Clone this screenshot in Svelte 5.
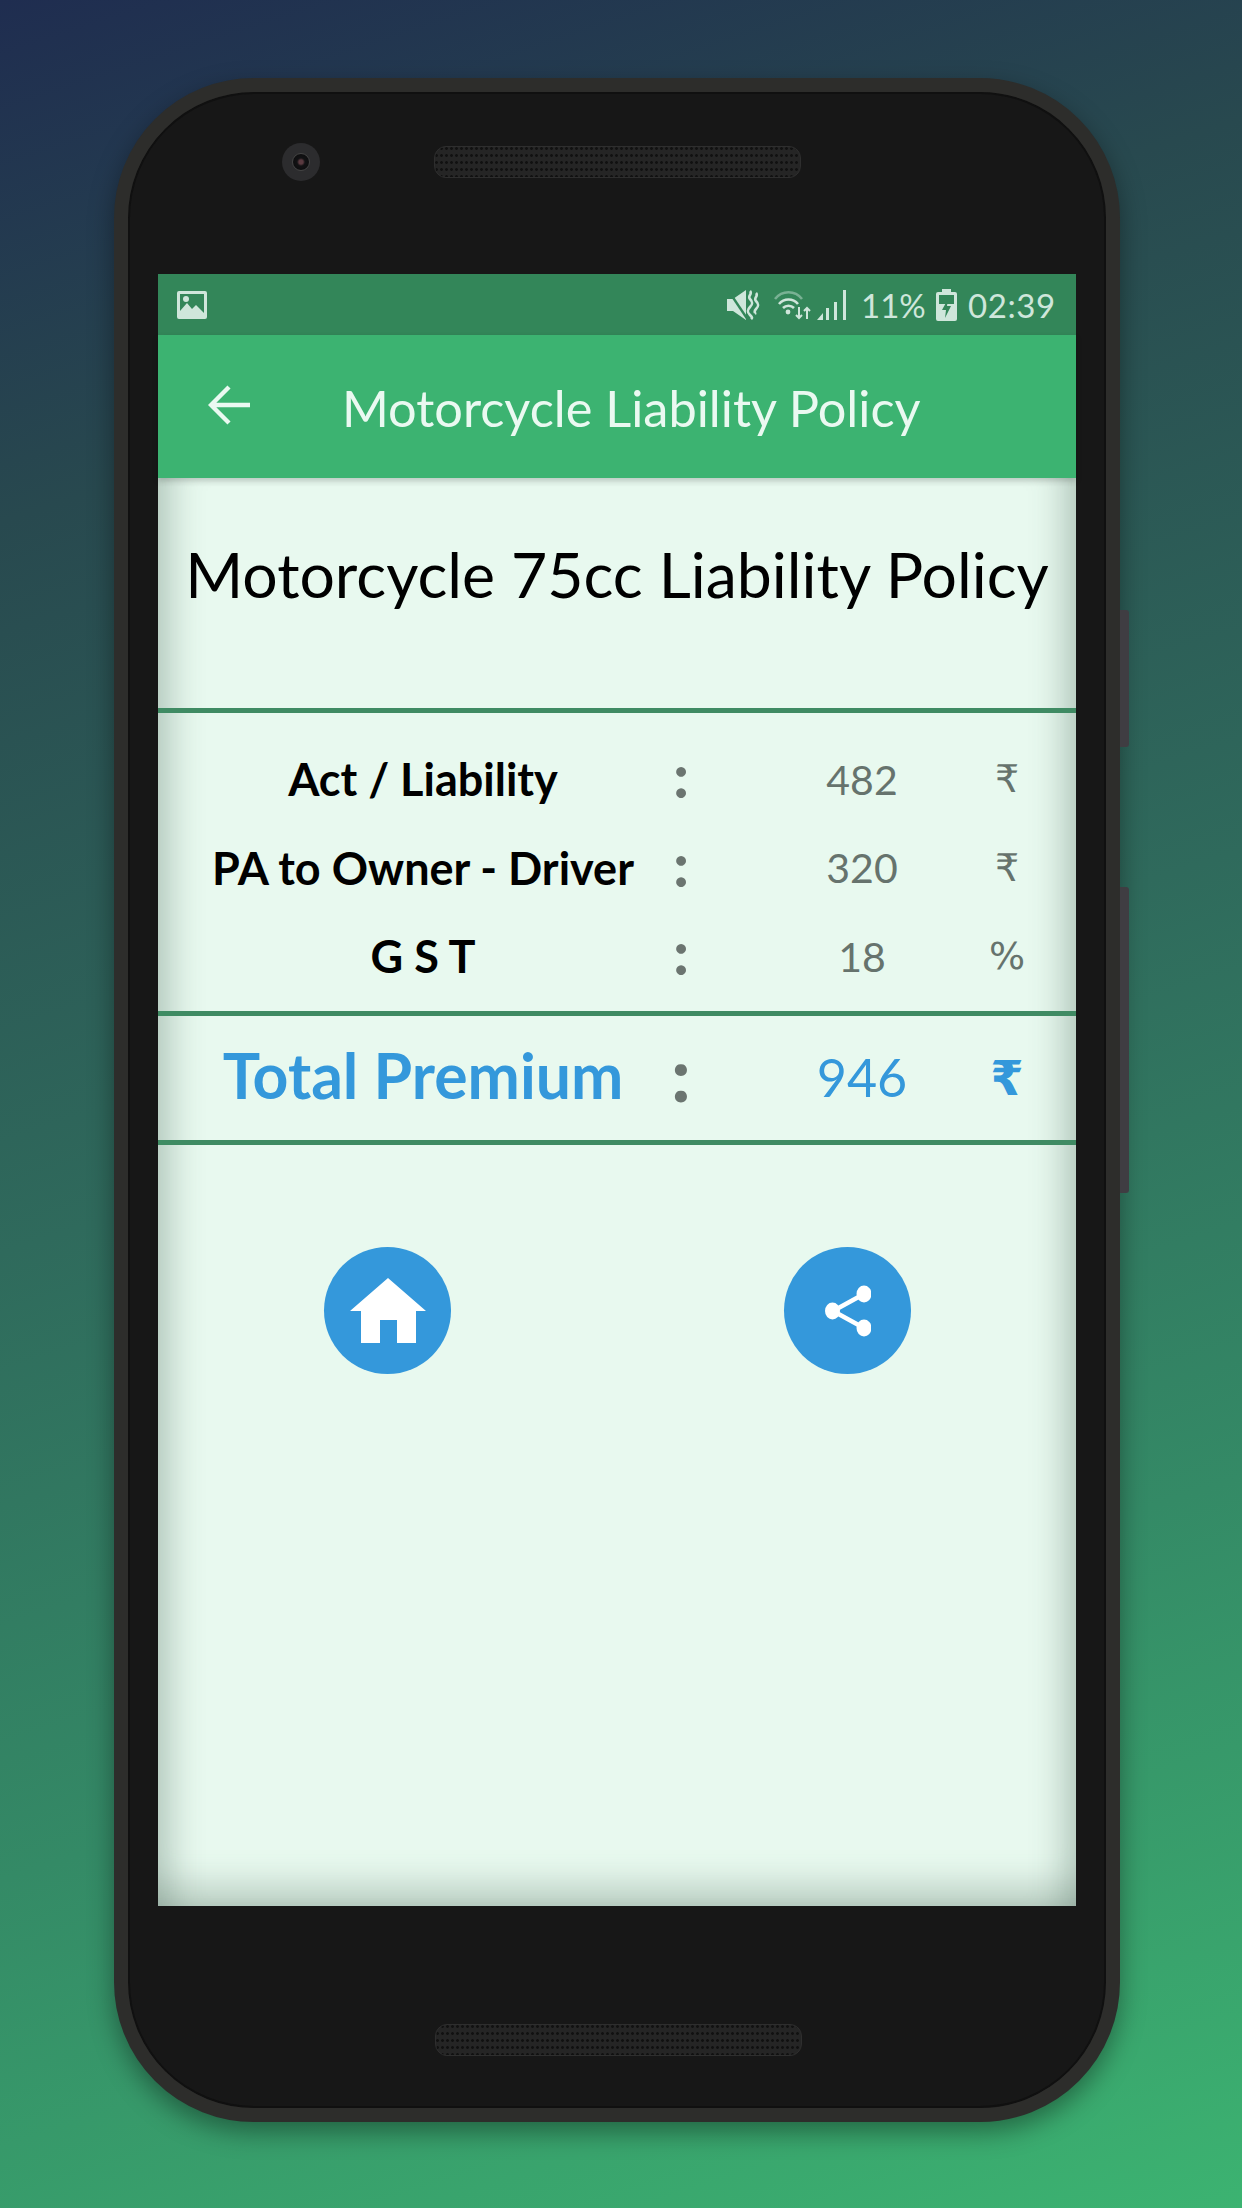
<script>
  const rows = [
    { label: 'Act / Liability', value: '482', unit: '₹' },
    { label: 'PA to Owner - Driver', value: '320', unit: '₹' },
    { label: 'G S T', value: '18', unit: '%' }
  ];
</script>

<div class="stage">
  <div class="phone">
    <span class="side side-a"></span>
    <span class="side side-b"></span>
    <div class="bezel-top">
      <div class="camera"><span class="lens"></span></div>
      <div class="speaker"></div>
    </div>
    <div class="screen">
      <div class="status">
        <svg class="ic-image" viewBox="0 0 30 28" width="30" height="28">
          <path fill="#cfe6db" fill-rule="evenodd" d="M2 0h26a2 2 0 0 1 2 2v24a2 2 0 0 1-2 2H2a2 2 0 0 1-2-2V2a2 2 0 0 1 2-2zM3 3v17l7-8 5 6 4-4 8 8V3z"/>
          <circle cx="9" cy="8" r="3" fill="#cfe6db"/>
        </svg>
        <span class="grow"></span>
        <svg class="ic-mute" viewBox="0 0 33 30" width="33" height="30">
          <path fill="#cfe6db" d="M0 9h6l13-9v30L6 21H0z"/>
          <path stroke="#338659" stroke-width="2.4" d="M1 0l20 30"/>
          <path fill="none" stroke="#cfe6db" stroke-width="2.6" d="M23 1c3 3-3 5 0 8s3 5 0 8-3 5 0 8 2 3 1 4M29 3c3 3-3 5 0 8s3 5 0 8 0 4-1 5"/>
        </svg>
        <svg class="ic-wifi" viewBox="0 0 40 30" width="40" height="30">
          <g fill="none" stroke="#cfe6db" stroke-width="2.6">
            <path stroke-opacity=".45" d="M1 9c7-9 20-9 27 0"/>
            <path d="M5 14c5-6 14-6 19 0"/>
            <path d="M9 18c3-3 8-3 11 0"/>
          </g>
          <circle cx="14" cy="22" r="2.4" fill="#cfe6db"/>
          <path stroke="#cfe6db" stroke-width="2" fill="none" d="M25 17v11m-3-3 3 3 3-3M33 29V18m-3 3 3-3 3 3"/>
        </svg>
        <svg class="ic-signal" viewBox="0 0 33 30" width="33" height="30">
          <path fill="#cfe6db" d="M0 30l6-7v7zM9 18h3v12H9zM17 12h3v18h-3zM26 0h3v30h-3z"/>
        </svg>
        <span class="pct">11%</span>
        <svg class="ic-batt" viewBox="0 0 21 32" width="21" height="32">
          <path fill="#cfe6db" fill-rule="evenodd" d="M6 0h9v3h4a2 2 0 0 1 2 2v25a2 2 0 0 1-2 2H2a2 2 0 0 1-2-2V5a2 2 0 0 1 2-2h4zM3 6v9h15V6z"/>
          <path fill="#338659" d="M12 10l-6 11h4l-1 8 6-12h-4z"/>
        </svg>
        <span class="time">02:39</span>
      </div>
      <div class="appbar">
        <svg class="back" viewBox="0 0 42 40" width="42" height="40">
          <path fill="none" stroke="#eaf9f1" stroke-width="4.4" d="M42 20H4M21 2 3 20l18 18"/>
        </svg>
        <h1>Motorcycle Liability Policy</h1>
      </div>
      <div class="content">
        <h2>Motorcycle 75cc Liability Policy</h2>
        <div class="rows">
          {#each rows as r}
            <div class="row">
              <span class="label">{r.label}</span>
              <span class="colon">:</span>
              <span class="value">{r.value}</span>
              <span class="unit">{r.unit}</span>
            </div>
          {/each}
        </div>
        <div class="row total">
          <span class="label">Total Premium</span>
          <span class="colon">:</span>
          <span class="value">946</span>
          <span class="unit">₹</span>
        </div>
        <div class="actions">
          <button class="fab" aria-label="Home">
            <svg viewBox="0 0 76 65" width="76" height="65">
              <path fill="#fff" d="M38 0 76 33H66V65H47V42H30V65H11V33H0z"/>
            </svg>
          </button>
          <button class="fab" aria-label="Share">
            <svg viewBox="0 0 46 52" width="46" height="52">
              <path stroke="#fff" stroke-width="4.5" fill="none" d="M39 9 8 26l31 17"/>
              <ellipse cx="39" cy="9" rx="7.5" ry="8.5" fill="#fff"/>
              <ellipse cx="7.5" cy="26" rx="7.5" ry="8.5" fill="#fff"/>
              <ellipse cx="39" cy="43" rx="7.5" ry="8.5" fill="#fff"/>
            </svg>
          </button>
        </div>
      </div>
    </div>
    <div class="bezel-bottom">
      <div class="speaker"></div>
    </div>
  </div>
</div>

<style>
  :global(body) { margin: 0; }
  .stage {
    width: 1242px;
    height: 2208px;
    padding: 78px 0 0 114px;
    box-sizing: border-box;
    overflow: hidden;
    background: linear-gradient(162deg, #1f2d50 0%, #28494f 20%, #2f6a5c 48%, #348a66 72%, #3cb371 100%);
    font-family: "Lato", "DejaVu Sans", sans-serif;
  }
  .phone {
    position: relative;
    width: 1006px;
    height: 2044px;
    box-sizing: border-box;
    border: 14px solid #2d2d2b;
    border-radius: 140px;
    background: #171717;
    box-shadow: inset 0 0 0 2px #101010, 0 10px 26px rgba(0, 0, 0, .38);
  }
  .side {
    position: absolute;
    left: 992px;
    width: 9px;
    background: #3f3d42;
    border-radius: 0 3px 3px 0;
  }
  .side-a { top: 518px; height: 137px; }
  .side-b { top: 795px; height: 306px; }
  .bezel-top {
    height: 182px;
    box-sizing: border-box;
    padding: 51px 0 0 154px;
    display: flex;
    align-items: flex-start;
  }
  .camera {
    width: 38px;
    height: 38px;
    border-radius: 50%;
    background: #2c2c2e;
    display: flex;
    align-items: center;
    justify-content: center;
  }
  .lens {
    width: 18px;
    height: 18px;
    border-radius: 50%;
    background: radial-gradient(circle, #5a3a40 0 2px, #121214 4px, #0b0b0c 100%);
    border: 1px solid #444;
    box-sizing: border-box;
  }
  .speaker {
    width: 367px;
    height: 32px;
    margin: 3px 0 0 114px;
    border-radius: 12px;
    background-color: #252525;
    background-image: radial-gradient(circle, #111 1.2px, transparent 1.6px);
    background-size: 5px 7px;
    background-position: 4px 5px;
    border: 1px solid #2e2e2e;
    box-sizing: border-box;
  }
  .screen {
    width: 918px;
    height: 1632px;
    margin-left: 30px;
    display: flex;
    flex-direction: column;
  }
  .status {
    height: 61px;
    flex: none;
    background: #338659;
    display: flex;
    align-items: center;
    padding: 0 20px 0 19px;
    box-sizing: border-box;
    color: #cfe6db;
  }
  .grow { flex: 1; }
  .ic-wifi { margin-left: 14px; }
  .ic-signal { margin-left: 3px; }
  .pct { font-size: 33px; margin-left: 11px; width: 64px; white-space: nowrap; }
  .ic-batt { margin-left: 11px; }
  .time { font-size: 33px; margin-left: 11px; width: 88px; white-space: nowrap; letter-spacing: .6px; }
  .appbar {
    height: 143px;
    flex: none;
    background: #3cb371;
    display: flex;
    align-items: center;
    padding: 0 0 0 50px;
    box-sizing: border-box;
    position: relative;
    z-index: 1;
    box-shadow: 0 3px 6px rgba(0, 0, 0, .18);
  }
  .back { margin-top: -4px; }
  h1 {
    margin: 2px 0 0 92px;
    font-size: 50.5px;
    font-weight: 400;
    color: #eaf9f1;
    white-space: nowrap;
  }
  .content {
    flex: 1;
    background: #e8f9ef;
    box-shadow: inset 40px 0 32px -26px rgba(70, 100, 85, .3), inset -40px 0 32px -26px rgba(70, 100, 85, .3), inset 0 -44px 36px -26px rgba(70, 100, 85, .32);
  }
  h2 {
    margin: 0;
    height: 235px;
    box-sizing: border-box;
    padding-top: 56px;
    font-size: 62.5px;
    line-height: 80px;
    font-weight: 400;
    color: #000;
    text-align: center;
    white-space: nowrap;
    border-bottom: 5px solid #3f8b63;
  }
  .rows {
    height: 303px;
    box-sizing: border-box;
    padding-top: 22px;
    border-bottom: 5px solid #3f8b63;
  }
  .row {
    display: flex;
    align-items: center;
    height: 88.5px;
    padding-left: 28px;
    font-size: 41px;
    color: #66736d;
  }
  .label {
    width: 474px;
    text-align: center;
    color: #000;
    font-weight: 700;
    font-size: 45px;
    white-space: nowrap;
  }
  .colon {
    width: 42px;
    text-align: center;
    font-weight: 900;
    font-size: 60px;
    line-height: 1;
    margin-top: -8px;
    color: #6b7570;
  }
  .value { width: 180px; margin-left: 70px; text-align: center; }
  .unit { width: 70px; margin-left: 20px; text-align: center; font-family: "DejaVu Sans", sans-serif; font-size: 38px; }
  .total {
    height: 124px;
    box-sizing: content-box;
    border-bottom: 5px solid #3f8b63;
    color: #3498db;
    font-size: 52px;
  }
  .total .label { color: #3498db; font-size: 62.5px; font-weight: 700; margin-top: -8px; }
  .total .colon { font-size: 74px; }
  .total .value { margin-top: -2px; }
  .total .unit { font-weight: 700; font-size: 48px; }
  .actions {
    display: flex;
    padding: 102px 0 0 166px;
    gap: 333px;
  }
  .fab {
    width: 127px;
    height: 127px;
    padding: 0;
    border: none;
    border-radius: 50%;
    background: #3498db;
    display: flex;
    align-items: center;
    justify-content: center;
  }
  .bezel-bottom {
    padding: 115px 0 0 307px;
  }
  .bezel-bottom .speaker { margin-left: 0; }
</style>
